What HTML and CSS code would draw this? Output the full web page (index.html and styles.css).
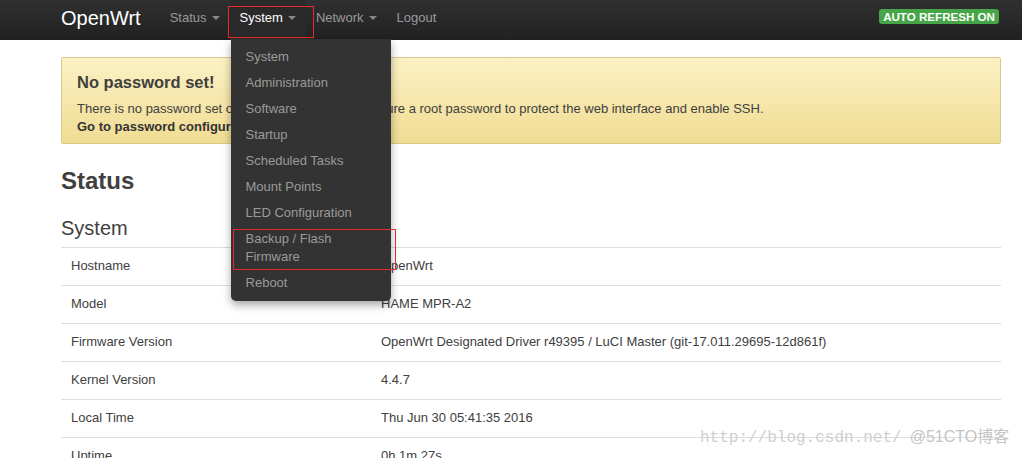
FILE: index.html
```html
<!DOCTYPE html>
<html>
<head>
<meta charset="utf-8">
<link rel="stylesheet" href="styles.css">
</head>
<body>
<header class="navbar">
  <div class="container nav-inner">
    <a class="brand">OpenWrt</a>
    <ul class="nav">
      <li class="nav-item"><a class="nav-link">Status<span class="caret"></span></a></li>
      <li class="nav-item active"><a class="nav-link">System<span class="caret"></span></a>
        <ul class="dropdown">
          <li><a>System</a></li>
          <li><a>Administration</a></li>
          <li><a>Software</a></li>
          <li><a>Startup</a></li>
          <li><a>Scheduled Tasks</a></li>
          <li><a>Mount Points</a></li>
          <li><a>LED Configuration</a></li>
          <li><a>Backup / Flash Firmware</a></li>
          <li><a>Reboot</a></li>
        </ul>
      </li>
      <li class="nav-item"><a class="nav-link">Network<span class="caret"></span></a></li>
      <li class="nav-item"><a class="nav-link">Logout</a></li>
    </ul>
    <span class="badge">AUTO REFRESH ON</span>
  </div>
</header>
<main class="container">
  <div class="alert">
    <h4 class="alert-title">No password set!</h4>
    <p class="alert-text">There is no password set on this router. Please configure a root password to protect the web interface and enable SSH.</p>
    <a class="alert-link">Go to password configuration...</a>
  </div>
  <h2 class="page-title">Status</h2>
  <h3 class="section-title">System</h3>
  <table class="info">
    <tr><td class="label">Hostname</td><td>OpenWrt</td></tr>
    <tr><td class="label">Model</td><td>HAME MPR-A2</td></tr>
    <tr><td class="label">Firmware Version</td><td>OpenWrt Designated Driver r49395 / LuCI Master (git-17.011.29695-12d861f)</td></tr>
    <tr><td class="label">Kernel Version</td><td>4.4.7</td></tr>
    <tr><td class="label">Local Time</td><td>Thu Jun 30 05:41:35 2016</td></tr>
    <tr><td class="label">Uptime</td><td>0h 1m 27s</td></tr>
  </table>
</main>
<div class="mark mark-nav"></div>
<div class="mark mark-menu"></div>
<div class="watermark"><span class="wm-url">http://blog.csdn.net/</span><span class="wm-site">@51CTO博客</span></div>
</body>
</html>
```

FILE: styles.css
```css
html, body {
  margin: 0;
  padding: 0;
  height: 458px;
  overflow: hidden;
  background: #fff;
  font-family: "Liberation Sans", Arial, sans-serif;
  font-size: 13px;
  line-height: 18px;
  color: #404040;
}
.container {
  width: 940px;
  margin-left: 61px;
}
.navbar {
  height: 40px;
  background: linear-gradient(#303030, #212121);
}
.nav-inner {
  display: flex;
  align-items: flex-start;
  height: 40px;
}
.brand {
  font-size: 20px;
  line-height: 20px;
  padding: 8px 19px 12px 0;
  color: #fff;
}
.nav {
  display: flex;
  list-style: none;
  margin: 0;
  padding: 0;
}
.nav-item {
  position: relative;
}
.nav-link {
  display: block;
  padding: 8px 10px 12px;
  line-height: 20px;
  color: #999;
}
.nav-item.active .nav-link {
  color: #fff;
  background: #2a2a2a;
}
.caret {
  display: inline-block;
  width: 0;
  height: 0;
  margin-left: 5px;
  vertical-align: middle;
  border-left: 4px solid transparent;
  border-right: 4px solid transparent;
  border-top: 4px solid #888;
  position: relative;
  top: -1px;
}
.badge {
  margin-left: auto;
  margin-top: 9px;
  margin-right: 2px;
  background: #46a546;
  color: #fff;
  font-weight: bold;
  font-size: 11.6px;
  line-height: 13px;
  padding: 1px 4px;
  border-radius: 3px;
}
.dropdown {
  position: absolute;
  top: 39px;
  left: 1px;
  width: 160px;
  margin: 0;
  padding: 5px 0;
  list-style: none;
  background: #333;
  border-radius: 0 0 5px 5px;
  box-shadow: 0 4px 8px rgba(0,0,0,0.35);
  z-index: 10;
}
.dropdown a {
  display: block;
  padding: 4px 15px;
  line-height: 18px;
  color: #9a9a9a;
}
.alert {
  margin-top: 17px;
  padding: 15px 15px 7px;
  border: 1px solid #d9c98c;
  border-radius: 2px;
  background: linear-gradient(#fcf1c5, #f0dc92);
}
.alert-title {
  margin: 0 0 9px;
  font-size: 16.5px;
  line-height: 18px;
  font-weight: bold;
  color: #404040;
}
.alert-text {
  margin: 0;
}
.alert-link {
  display: block;
  font-weight: bold;
  color: #333;
}
.page-title {
  margin: 19px 0 0;
  font-size: 24px;
  line-height: 36px;
  font-weight: bold;
  color: #404040;
}
.section-title {
  margin: 15px 0 5px;
  font-size: 20px;
  line-height: 28px;
  font-weight: normal;
  color: #404040;
}
.info {
  width: 100%;
  border-collapse: collapse;
}
.info td {
  border-top: 1px solid #ddd;
  padding: 9px 10px 10px;
  line-height: 18px;
  vertical-align: top;
}
.info td.label {
  width: 290px;
}
.mark {
  position: absolute;
  border: 1px solid #e52b2b;
  z-index: 20;
}
.mark-nav {
  left: 228px;
  top: 6px;
  width: 84px;
  height: 30px;
}
.mark-menu {
  left: 233px;
  top: 229px;
  width: 161px;
  height: 39px;
}
.watermark {
  position: absolute;
  left: 700px;
  top: 427px;
  white-space: nowrap;
  z-index: 30;
}
.wm-url {
  font-family: "Liberation Mono", monospace;
  font-size: 16px;
  line-height: 20px;
  color: #cfcfcf;
}
.wm-site {
  font-family: "Liberation Sans", "Noto Sans CJK SC", sans-serif;
  font-size: 16px;
  line-height: 20px;
  color: #c4c4c4;
  margin-left: 8px;
}
```
